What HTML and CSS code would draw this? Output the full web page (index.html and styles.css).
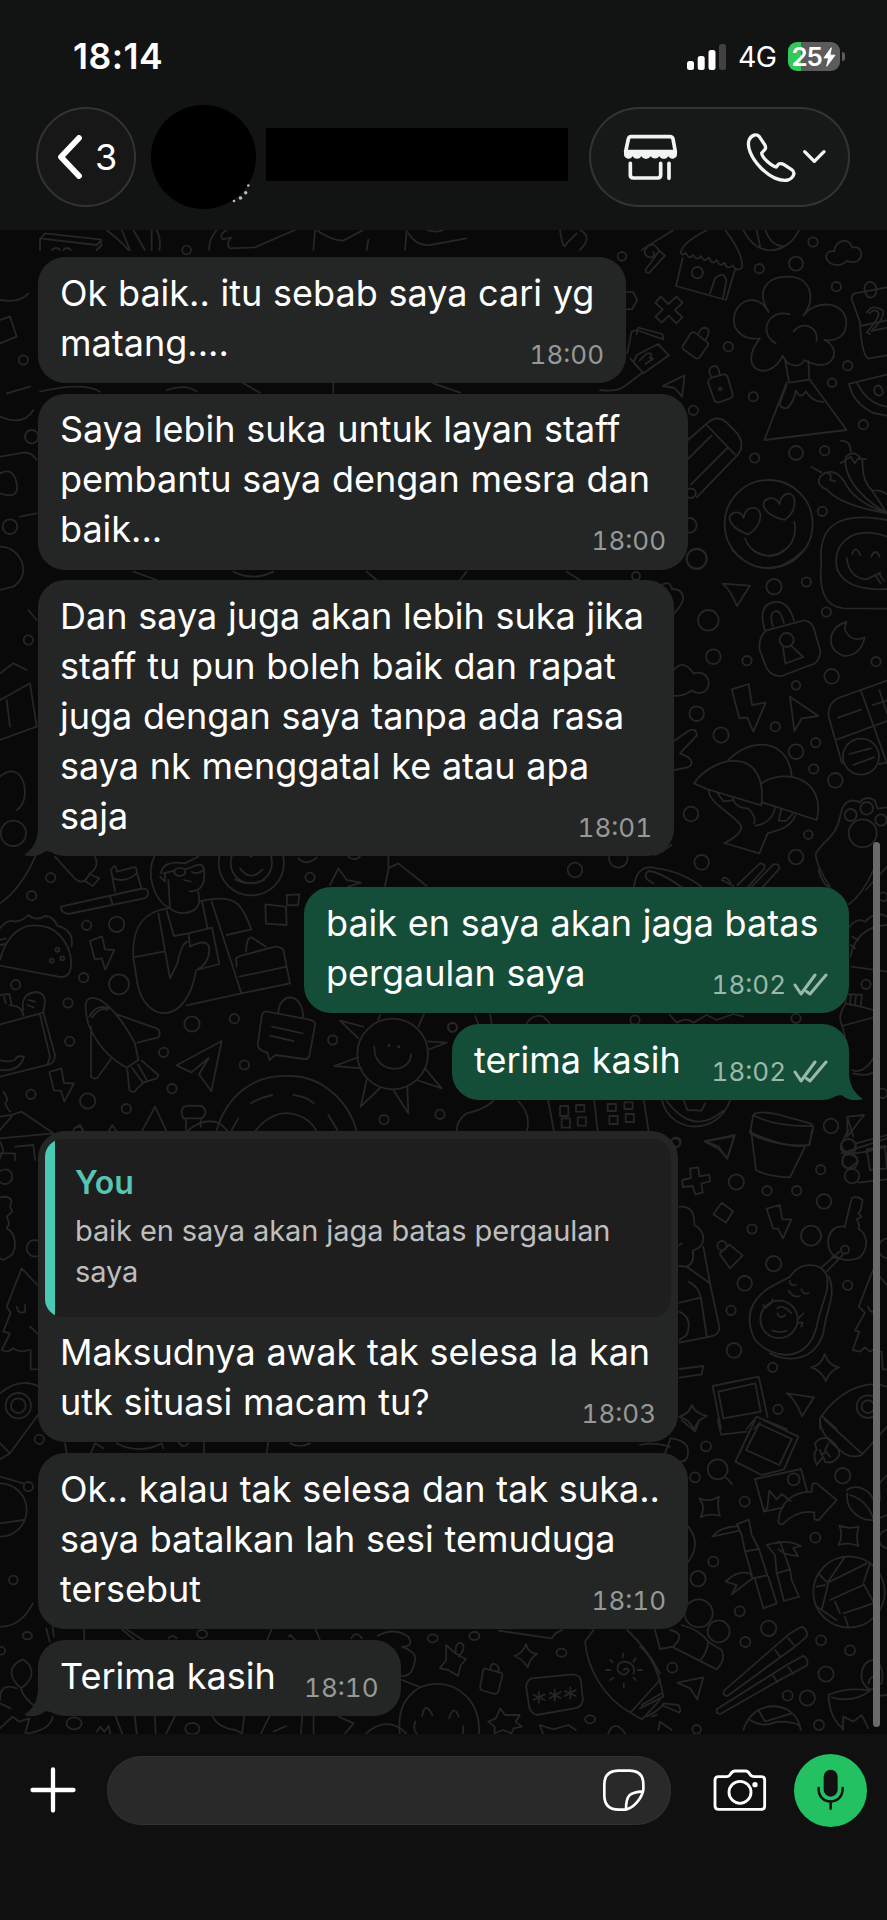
FILE: index.html
```html
<!DOCTYPE html>
<html lang="ms">
<head>
<meta charset="utf-8">
<title>Chat</title>
<link rel="stylesheet" href="styles.css">
</head>
<body>
<header class="header">
  <div class="status">
    <span class="clock">18:14</span>
    <div class="indicators">
      <svg class="signal" width="40" height="28" viewBox="0 0 40 28"><g fill="#fff"><rect x="0" y="18" width="7" height="9" rx="2.5"/><rect x="10.7" y="13" width="7" height="14" rx="2.5"/><rect x="21.5" y="7" width="7" height="20" rx="2.5"/></g><rect x="32" y="1" width="7" height="26" rx="2.5" fill="#414141"/></svg>
      <span class="network">4G</span>
      <div class="battery"><span>25</span><svg width="13" height="20" viewBox="0 0 14 20"><path d="M9 0 1 11h5L4 20l9-12H7.500z" fill="#fff" stroke="#fff" stroke-linejoin="round"/></svg></div>
      <i class="nub"></i>
    </div>
  </div>
  <nav class="nav">
    <div class="back">
      <svg width="26" height="44" viewBox="0 0 26 44"><path d="M22 3 4 22 22 41" fill="none" stroke="#fff" stroke-width="5.800" stroke-linecap="round" stroke-linejoin="round"/></svg>
      <span>3</span>
    </div>
    <div class="avatar"><svg class="dots" width="20" height="22" viewBox="0 0 20 22"><g fill="#bbb"><circle cx="2" cy="19" r="1.300"/><circle cx="8.500" cy="16" r="1.800"/><circle cx="13.700" cy="10.800" r="1.700"/><circle cx="16.300" cy="3.500" r="1.300"/></g></svg></div>
    <div class="name"></div>
    <div class="actions">
      <svg width="261" height="100" viewBox="87 321 783 300" fill="none" stroke="#f2f4f3" stroke-width="11" stroke-linecap="round" stroke-linejoin="round">
        <path d="M213 410H330Q337 410 339 417L346 455H197L205 417Q207 410 213 410Z"/>
        <path d="M192 454H351V461A14 14 0 0 1 325 469A16 16 0 0 1 298 469A16 16 0 0 1 272 469A16 16 0 0 1 244 469A15 15 0 0 1 218 469A14 14 0 0 1 192 461Z" fill="#f2f4f3" stroke="none"/>
        <path d="M211 490V525Q211 534 220 534H293Q302 534 302 525V490M327 490V535"/>
        <path d="M584 405Q574 407 568 418C559 438 573 474 603 504C630 532 661 545 684 540Q698 535 701 524Q704 515 695 509L672 494Q664 489 656 492L649 501C635 498 606 474 605 459L615 448Q619 442 614 434L598 410Q592 403 584 405Z" stroke-width="10"/>
        <path d="M734 455 763 484 792 455" stroke-width="10"/>
      </svg>
    </div>
  </nav>
</header>

<main class="chat">
  <svg class="wallpaper" viewBox="0 230 887 1504">
    <g transform="translate(600 230) scale(.33333)">
      <circle cx="66" cy="79" r="13"/><circle cx="639" cy="36" r="14"/><circle cx="588" cy="101" r="21"/><circle cx="478" cy="116" r="14"/><circle cx="709" cy="170" r="14"/><circle cx="292" cy="128" r="17"/><circle cx="385" cy="350" r="14"/><circle cx="460" cy="500" r="14"/><circle cx="280" cy="541" r="14"/><circle cx="743" cy="407" r="14"/><circle cx="696" cy="458" r="13"/><circle cx="790" cy="584" r="14"/><circle cx="464" cy="684" r="14"/><circle cx="588" cy="669" r="21"/><circle cx="674" cy="662" r="14"/><circle cx="667" cy="844" r="14"/><circle cx="268" cy="886" r="22"/><circle cx="290" cy="986" r="30"/>
      <path d="M176 65 139 116Q132 130 148 128L195 77 176 60Q162 36 145 48Q125 65 141 79L152 83Q168 78 160 66"/>
      <path d="M322 0Q250 35 242 67Q246 80 257 68Q268 92 279 74Q290 95 303 78Q312 100 327 82Q336 108 350 90Q360 114 373 98Q382 122 398 106Q410 128 426 112Q432 76 376 0M248 84 228 168 378 210 405 119M330 190 345 145Q374 120 379 154L369 204"/>
      <path d="M430 0Q460 60 512 61Q570 56 597 0M470 0 480 48M496 0Q512 46 547 48"/>
      <path d="M696 102C670 90 674 60 703 64C704 27 752 22 756 53C787 43 796 88 764 96Q750 98 742 92Q720 112 696 102Z"/>
      <path d="M182 200 205 222 229 200 248 218 225 240 247 262 229 280 206 257 185 278 166 260 188 239 166 218ZM80 185 100 187 112 210 96 237 78 238"/>
      <path d="M248 348 273 309Q280 303 288 310L322 337Q327 343 322 349L298 383Q292 388 285 383L248 356ZM296 309Q305 288 321 295Q333 304 317 329"/>
      <path d="M82 370 95 305 110 300 190 328 187 312 114 293 110 312M100 396 111 375 174 342 207 376 130 430ZM130 430 91 385M0 480Q50 488 78 466L125 430M119 391 140 371Q163 367 149 384L160 386 136 402"/>
      <path d="M188 468 254 436 246 500 224 474Z"/>
      <path d="M335 443 370 433Q381 432 383 442L398 492Q400 502 389 506L357 517Q346 519 342 508L325 460Q323 448 335 443ZM334 440Q319 415 342 408Q357 407 359 435"/><circle cx="361" cy="477" r="4"/>
      <path d="M506 246C460 170 515 138 566 140C626 140 653 200 610 257C650 205 740 214 739 281C736 325 704 334 673 330C730 355 700 438 613 390C604 412 564 416 548 377C510 460 405 420 480 325C430 332 397 300 402 262C411 205 475 188 506 246M569 253C510 235 470 305 527 340M580 305C606 270 659 290 649 334M555 387 567 458 628 449 625 393M560 458 493 630 740 600 630 450"/>
      <path d="M560 465 541 514Q535 534 557 535Q576 530 588 482Q602 510 618 484Q635 515 670 516"/>
      <path d="M861 172 764 190Q754 194 755 207L780 277Q784 370 804 386L861 376M780 288 861 271M800 160Q808 150 824 162Q836 182 822 199Q803 210 797 190Q788 172 800 160M800 248Q818 220 848 241Q856 264 814 303L861 293M808 250Q828 232 836 251Q836 266 800 307L810 312"/>
      <path d="M861 434 747 462Q760 520 820 549L861 557M772 460Q800 520 861 530M826 470Q842 458 850 488Q840 505 825 490Q820 480 826 470"/>
      <path d="M264 630 321 580Q350 552 380 578L413 612Q436 645 413 675L290 802M317 582 405 674M265 686 335 616M273 763 382 654M264 777Q286 772 288 790Q284 808 264 802"/>
      <circle cx="506" cy="882" r="132"/>
      <path d="M446 913C400 900 370 862 402 848Q423 843 431 864C435 830 471 823 481 850Q484 888 446 913ZM553 870C490 855 475 815 507 805Q531 802 538 823C546 783 582 781 584 815Q584 850 553 870ZM583 875C600 958 515 1000 464 964Q443 950 435 925"/>
      <path d="M661 739Q698 706 733 754Q760 814 861 850Q720 825 680 778Q646 765 661 739ZM634 711 664 727M674 728Q700 730 690 750L706 754M738 680Q766 655 788 694Q785 750 815 780L861 850Q745 780 736 700ZM722 632Q753 632 752 665M722 700 752 680 764 700 775 685 798 688M820 782Q840 778 861 793"/>
      <path d="M861 870C700 840 655 900 664 1000C655 1090 680 1130 730 1135L861 1136M861 920C750 880 693 950 712 1020Q742 1085 861 1077M756 973Q766 942 781 975M814 980Q826 952 839 980M740 984Q748 1045 800 1048L842 1028M826 1035 842 1060M836 1030 852 1052"/>
    </g>
    <g transform="translate(600 550) scale(.33333)">
      <circle cx="290" cy="27" r="30"/><circle cx="522" cy="110" r="23"/><circle cx="619" cy="96" r="14"/><circle cx="679" cy="186" r="14"/><circle cx="325" cy="211" r="31"/><circle cx="340" cy="320" r="22"/><circle cx="441" cy="332" r="14"/><circle cx="828" cy="335" r="14"/><circle cx="695" cy="379" r="22"/><circle cx="588" cy="406" r="13"/><circle cx="290" cy="491" r="22"/><circle cx="526" cy="530" r="14"/><circle cx="363" cy="555" r="23"/><circle cx="588" cy="605" r="22"/><circle cx="647" cy="578" r="14"/><circle cx="641" cy="657" r="14"/><circle cx="706" cy="691" r="22"/><circle cx="273" cy="792" r="22"/><circle cx="625" cy="854" r="13"/><circle cx="588" cy="921" r="22"/><circle cx="305" cy="937" r="22"/><circle cx="783" cy="620" r="54"/><circle cx="560" cy="270" r="21"/><circle cx="108" cy="78" r="12"/><circle cx="55" cy="925" r="28"/><circle cx="752" cy="795" r="18"/><circle cx="800" cy="775" r="19"/><circle cx="843" cy="810" r="17"/><circle cx="788" cy="850" r="42"/>
      <path d="M458 0Q510 35 553 0M396 0Q500 110 612 0"/>
      <path d="M368 101 450 107 411 168Q390 117 368 101ZM570 440 655 498 606 505 583 543ZM395 418 446 402 456 465 497 458 460 545 442 503 418 504Z"/>
      <path d="M494 240C477 180 495 160 524 156Q565 152 582 212M498 242 612 211Q636 215 642 236L661 302Q659 330 643 341L545 378Q515 380 500 355L479 300Q475 262 498 242ZM519 229Q505 190 528 183Q542 182 552 219M549 292 556 340 610 321 572 286M740 216C680 230 676 305 734 318Q782 316 794 263Q752 278 735 240Q732 230 740 216Z"/>
      <path d="M222 360Q250 325 281 371C318 355 342 403 314 425Q290 435 277 421Q250 440 222 437M222 573 265 543Q290 530 290 557L240 610 260 619Q290 640 260 653L222 660M185 105Q210 90 216 117Q245 116 249 140Q252 160 222 190"/>
      <path d="M861 392 715 444Q682 460 686 500L726 640M782 420 861 640M712 568 861 513M714 503 783 479M818 465 861 452M838 420 861 490M748 612 812 595M760 645 822 622M838 642 861 638"/>
      <path d="M282 700C345 610 505 590 484 766L320 717ZM382 633C455 555 565 570 575 676M484 700C560 650 680 690 650 810L487 757M325 720C330 765 400 790 424 829Q425 853 373 879L478 910 503 850C530 840 565 840 586 797M350 726 370 754 397 751M397 740Q405 775 444 775Q470 800 462 820M467 827Q515 820 526 772M544 778 536 812 558 813 578 792"/>
      <path d="M102 1010Q110 940 170 955Q250 965 310 1015M250 1015Q180 965 145 963Q122 980 160 1000M365 990 400 1008M368 985Q380 978 392 1000M412 1005 480 940Q495 940 494 954L445 1010M455 1010 520 943Q540 940 538 956L485 1015M690 1010Q650 950 647 912C670 870 710 860 720 800Q732 735 780 757Q798 734 825 752L832 774M861 772 832 776M797 1020 861 950M165 915Q190 905 214 885"/>
    </g>
    <g transform="translate(0 830) scale(.33333)">
      <circle cx="40" cy="10" r="38"/><circle cx="152" cy="143" r="14"/><circle cx="95" cy="197" r="14"/><circle cx="260" cy="286" r="14"/><circle cx="350" cy="283" r="23"/><circle cx="251" cy="443" r="14"/><circle cx="47" cy="464" r="14"/><circle cx="357" cy="463" r="30"/><circle cx="204" cy="519" r="14"/><circle cx="209" cy="634" r="14"/><circle cx="93" cy="793" r="14"/><circle cx="263" cy="813" r="23"/><circle cx="379" cy="836" r="14"/><circle cx="516" cy="776" r="14"/><circle cx="491" cy="667" r="14"/><circle cx="576" cy="582" r="23"/><circle cx="703" cy="566" r="14"/><circle cx="733" cy="705" r="14"/><circle cx="998" cy="630" r="14"/><circle cx="930" cy="142" r="14"/><circle cx="1152" cy="869" r="14"/><circle cx="1320" cy="853" r="14"/><circle cx="1357" cy="592" r="14"/><circle cx="1178" cy="672" r="106"/><circle cx="754" cy="98" r="98"/><circle cx="754" cy="98" r="62"/>
      <circle cx="172" cy="359" r="6"/><circle cx="155" cy="392" r="6"/><circle cx="187" cy="385" r="6"/><circle cx="1167" cy="646" r="2"/><circle cx="1196" cy="650" r="2"/>
      <path d="M0 220Q60 180 106 80M165 80 224 145Q250 170 268 132Q300 110 285 80M268 132 298 145 278 168 255 153"/>
      <path d="M345 184 333 120Q350 95 350 125L390 115Q412 105 410 125L425 178M340 145Q375 160 410 130M182 230 420 177Q442 172 444 186Q447 200 432 205L205 252Q184 250 182 230ZM330 200 337 220"/>
      <path d="M0 295Q22 265 45 275Q70 272 85 255Q110 275 135 258Q160 258 172 288Q222 300 215 350M0 390C20 310 70 280 115 287C180 290 225 360 210 425Q200 445 175 440L0 407M0 330 18 325M0 345 16 342"/>
      <path d="M270 333 306 319 315 358 343 360 316 419 305 385 284 388ZM148 726 184 715 192 759 222 760 193 815 183 782 162 782ZM530 706 665 633 634 784 597 733 626 684 574 727Z"/>
      <path d="M463 80C440 125 455 205 508 235M505 150 510 235Q540 260 580 242Q598 230 598 210L595 186M483 130Q488 90 555 100L595 80M490 130 524 122M522 122Q535 108 553 118Q562 136 539 138Q522 136 522 122M553 118 574 112Q610 95 612 118Q595 136 575 125M480 140 495 155 495 130M612 120Q620 185 568 184M552 150 572 155"/>
      <path d="M503 235C430 245 395 290 400 382L412 460C435 580 560 590 588 422M400 382 490 365M475 250 510 445 532 400Q545 340 562 335M500 242 522 318 565 310 636 293 658 402 590 420Q632 398 627 350Q618 325 570 350L566 312M606 214 622 292M598 214Q680 195 710 220Q730 235 754 298L680 315M635 215 724 490M560 526 724 490 870 460 850 360Q843 350 826 350L720 378 708 385 710 410M718 440 860 410M738 365Q740 320 755 322L798 350"/>
      <path d="M796 223 858 230 860 285 798 281ZM860 195 898 193 894 226 862 225ZM720 62 755 80M720 115Q752 157 788 118M706 148Q750 170 792 150"/>
      <path d="M798 544 925 568Q948 573 945 586L928 678Q922 690 912 687L826 675 808 690 802 668Q776 662 773 645L785 560Q787 545 798 544ZM816 590 908 610M810 617 880 633M835 550C835 490 905 480 910 560"/>
      <path d="M262 510C285 490 340 520 405 640L415 690 380 713Q300 670 265 582 250 525 262 510ZM268 560Q290 520 325 535M276 562Q300 530 322 540M350 553 470 595Q485 605 475 622L412 638M273 590V740Q282 750 292 743L333 687M382 718 388 780Q400 795 412 775L430 758 470 745Q475 740 475 735L425 692M395 712 430 760M415 705 440 750"/>
      <path d="M0 495 28 492 35 525M12 500 17 520M28 526Q66 525 70 556M70 540Q60 490 110 486Q145 490 130 545M85 510 105 515M82 525 100 532M0 583 130 548 165 675Q165 700 145 704L0 740M120 555 150 680 143 702M0 720Q60 725 72 680Q50 675 45 690 25 698 0 690"/>
      <path d="M1020 572 1090 590M1020 572 1075 625M1283 634 1340 638 1282 660M1074 682 1003 708 1085 715M1100 750 1082 830 1140 774M1180 780 1225 850 1222 770M1250 750 1325 775 1275 715M1135 568 1140 555M1255 590 1272 552M1123 650C1120 735 1234 733 1233 672"/>
      <path d="M650 900C680 800 760 730 870 738C970 738 1050 820 1070 905M765 905C790 870 830 845 870 850Q930 860 950 905M752 820Q780 803 817 795M880 795Q920 800 942 820M985 855 1012 900M715 865 695 900M550 865Q535 830 565 827L605 828Q628 845 605 865ZM558 868V900M602 868V890M560 905Q610 860 660 880L685 905M425 905 465 830 500 905M325 905 337 885 350 905M225 895 240 885 250 905"/>
      <path d="M0 860 35 855 65 845 160 910M35 860 0 900M10 785Q30 810 15 820 25 840 30 845M0 925 160 910M0 970H45V990M45 950 100 945 105 990M0 935 10 960 0 985"/>
      <path d="M1015 115 990 165M1015 115 1040 150 1083 158 1045 170M1165 80V120L1155 168M1165 115 1195 100 1280 168M1045 80Q1060 95 1080 80M895 85Q920 110 950 82"/>
    </g>
    <g transform="translate(440 870) scale(.33333)">
      <circle cx="405" cy="0" r="22"/><circle cx="1278" cy="343" r="14"/><circle cx="1330" cy="80" r="13"/><circle cx="1173" cy="768" r="22"/><circle cx="585" cy="450" r="14"/><circle cx="1068" cy="445" r="14"/><circle cx="38" cy="472" r="13"/><circle cx="1328" cy="670" r="14"/><circle cx="708" cy="816" r="14"/><circle cx="1225" cy="830" r="23"/><circle cx="1230" cy="874" r="23"/>
      <path d="M1225 175Q1250 140 1275 155Q1310 120 1341 140M1231 260Q1250 170 1341 165M1235 290 1341 305M1232 225 1245 235M1237 200 1255 210M1215 400 1262 410 1266 375 1220 372ZM1232 375 1230 405M1248 375 1245 407M1205 468 1310 440 1300 420 1262 410M1215 405Q1190 440 1208 470L1215 500M1237 600Q1270 615 1303 560M1240 610Q1300 625 1310 590"/>
      <path d="M325 693 342 785M463 693 473 785M612 693 626 785M360 708H385V738H360ZM408 705H433V725H408ZM365 745H390V773H365ZM413 742H438V767H413ZM503 702H528V723H503ZM553 697H578V717H553ZM508 738H533V762H508ZM557 732H582V756H557Z"/>
      <path d="M667 693C690 790 830 800 870 693M680 693Q760 800 850 722M732 693 742 720 785 722 795 700M160 693Q130 720 80 730Q50 750 50 783M235 693Q275 735 260 785M795 813 884 798 861 865 836 830Z"/>
      <path d="M940 735Q955 720 1020 735L1110 760Q1120 765 1120 775L1107 825Q1050 840 930 787ZM940 735Q1000 770 1115 768M1222 740 1272 735 1222 800ZM1222 740 1240 800M1205 850 1341 805M1135 0Q1150 50 1180 60M1227 103Q1270 70 1300 0M105 438 115 462M150 432 155 462M690 435 710 458Q740 440 760 458L800 435 830 450 880 432 910 440M260 460Q280 430 310 440L330 460"/>
    </g>
    <g transform="translate(640 1130) scale(.33333)">
      <circle cx="106" cy="39" r="14"/><circle cx="289" cy="156" r="23"/><circle cx="381" cy="182" r="14"/><circle cx="470" cy="182" r="14"/><circle cx="542" cy="119" r="14"/><circle cx="552" cy="214" r="22"/><circle cx="336" cy="297" r="14"/><circle cx="513" cy="317" r="30"/><circle cx="401" cy="401" r="23"/><circle cx="314" cy="460" r="22"/><circle cx="273" cy="541" r="14"/><circle cx="623" cy="466" r="14"/><circle cx="282" cy="661" r="22"/><circle cx="398" cy="712" r="14"/><circle cx="414" cy="838" r="14"/><circle cx="417" cy="568" r="56"/><circle cx="615" cy="359" r="12"/><circle cx="636" cy="138" r="22"/><circle cx="246" cy="347" r="14"/><circle cx="684" cy="830" r="34"/><circle cx="684" cy="830" r="19"/><circle cx="745" cy="355" r="30"/>
      <path d="M333 0 348 120Q380 140 450 142L495 50M330 10Q400 50 508 46L516 0M195 35 284 15 262 86 236 57Z"/>
      <path d="M150 115 175 112 178 139 208 134 210 154 184 161 188 188 166 193 158 168 128 171 127 150 153 144ZM245 218 279 244 258 278 220 253ZM380 236 419 225 427 268 454 268 429 325 414 296 399 295ZM241 375Q238 368 246 365L268 343 308 377 270 415ZM514 712Q545 705 554 672Q565 706 597 712Q565 725 558 754Q545 722 514 712ZM118 860Q150 850 155 825Q168 852 201 858Q172 870 162 897Q148 870 118 860ZM440 790 522 802 486 859Q465 805 440 790Z"/>
      <path d="M118 230Q165 225 163 285C200 305 200 350 158 362Q165 400 140 410L210 460 238 590Q240 615 210 620L118 638M118 345 125 340M118 408 140 410M190 350 210 460M145 455Q175 470 182 500L200 618M118 518 182 503M118 545Q160 565 140 615L118 630M118 717 190 708 185 733 118 743"/>
      <path d="M450 440C480 395 540 395 560 435C570 490 545 510 530 590C500 700 400 690 345 630C310 560 335 510 385 475ZM567 440C590 500 560 530 550 610C520 700 440 695 390 670M449 452Q450 470 468 465M484 478Q490 497 506 488M446 482Q460 505 480 498M412 535Q425 525 436 535M440 535 454 550M412 550Q420 570 436 555M398 602Q420 610 440 602M370 525 375 535 393 520 398 508M475 565 490 550M472 578 488 578 484 590"/>
      <path d="M614 292 635 205Q650 195 668 210L662 240 655 250 665 260 650 268 658 285 655 295M612 290C560 280 550 360 585 378Q620 400 660 382C690 350 680 310 655 296M598 365 545 412M608 375 560 425M577 380 592 385M700 418Q675 480 656 530L675 548 645 602 658 605 638 660 660 665 675 652 690 665 705 655 720 665M741 465 700 418M684 530Q690 550 705 545L710 530M725 665 728 718H741"/>
      <path d="M218 768 356 740 383 862M218 768 243 895M235 785 346 760 362 845 250 865ZM320 897 350 860 440 897M342 897 360 878M625 0 605 40Q600 60 626 70Q646 60 648 40L741 15M608 90Q605 75 625 72Q650 74 653 95L625 116 608 105ZM640 70 680 65 741 50M680 58 735 48 741 115 690 120ZM655 158 741 148M741 770C670 745 590 790 540 865V897M548 860 590 897"/>
    </g>
    <g transform="translate(640 1420) scale(.33333)">
      <circle cx="198" cy="79" r="15"/><circle cx="233" cy="148" r="30"/><circle cx="165" cy="172" r="15"/><circle cx="314" cy="245" r="15"/><circle cx="461" cy="178" r="18"/><circle cx="608" cy="167" r="23"/><circle cx="526" cy="353" r="15"/><circle cx="220" cy="425" r="15"/><circle cx="174" cy="476" r="23"/><circle cx="299" cy="574" r="15"/><circle cx="176" cy="580" r="42"/><circle cx="236" cy="634" r="33"/><circle cx="386" cy="625" r="23"/><circle cx="316" cy="666" r="15"/><circle cx="543" cy="661" r="15"/><circle cx="630" cy="691" r="15"/><circle cx="558" cy="762" r="23"/><circle cx="443" cy="827" r="15"/><circle cx="502" cy="834" r="23"/><circle cx="97" cy="743" r="15"/><circle cx="537" cy="915" r="15"/><circle cx="627" cy="516" r="107"/><circle cx="170" cy="928" r="13"/><circle cx="745" cy="357" r="28"/>
      <path d="M233 0 243 44 320 35M345 0 286 125 365 165 432 148 475 50 370 0M358 12 455 57 418 135 318 90ZM345 177 483 147 502 217M345 177 372 275 430 262M382 263 388 212 410 238 425 222 452 243M382 263 372 275M415 303C420 250 455 215 515 215L518 190 530 190 590 240 535 301 523 298V277C480 270 450 290 428 313Q415 315 415 303Z"/>
      <path d="M178 235Q205 248 237 230Q230 255 240 288Q205 278 182 292Q198 260 178 235ZM598 317Q625 328 656 320Q647 350 655 378Q627 365 596 375Q610 345 598 317ZM258 173 277 193"/>
      <path d="M290 313 327 299 335 345 357 387 315 394 305 345ZM315 394 338 475 382 466 357 387M345 478 370 565 410 550 385 470M217 350Q240 320 295 318L298 332ZM257 485Q290 450 330 460L338 475 275 523 290 495ZM380 375 420 365 450 448 410 460 405 405ZM410 458 432 543 477 530 455 480 450 448M408 370Q440 358 483 378L460 384 474 408Q435 405 415 388"/>
      <path d="M540 0Q540 50 615 102Q640 115 665 105L741 20M555 0 665 100M525 120Q520 95 530 90L525 70Q540 50 565 55Q600 80 598 105Q580 135 555 125L550 110 530 135ZM565 70 555 90 570 110M540 90 545 105 560 95M620 210C650 190 690 210 697 235L720 220M622 220C615 270 660 305 705 300L741 285M630 225Q680 240 700 295M718 190 741 165"/>
      <path d="M535 460 562 488 615 410M565 490 545 570M570 485 680 430M530 500 555 495M570 540 670 495M600 580 585 545M610 580 700 550M615 590 625 622M670 490 705 555M672 483 690 430M530 560 590 600"/>
      <path d="M252 812 450 640 485 620Q505 630 500 650L465 680 262 828Q248 828 252 812ZM405 690 420 710M445 655 462 675M230 868 440 735 490 707Q508 720 500 737L410 785 245 880Q228 885 230 868ZM400 768 412 787M445 742 460 762M310 930C340 830 470 840 482 930M355 870 375 905 455 880M330 900Q370 925 410 905 470 905 480 920M112 788 190 772 172 838 150 805Z"/>
      <path d="M0 680Q50 720 70 830L0 865M5 855 65 820M20 890Q60 870 72 850L115 855Q125 870 118 878L72 858M35 890 50 885M55 930 60 905 95 930M45 630 60 687 100 680Q140 640 90 630M125 615Q180 630 205 665L245 690Q258 720 230 748L100 682M205 665Q200 700 182 720M0 75Q40 65 90 80M90 55Q145 60 144 95Q145 125 120 125M90 60 75 100M125 0 165 35 178 0M145 320Q185 370 145 425"/>
      <path d="M565 825Q570 900 610 925M565 825Q620 800 690 812M575 832Q640 850 690 812M665 760Q670 720 705 720Q735 740 725 790L690 810Q660 790 665 760ZM685 790Q695 755 710 785M608 930 610 890 640 905 665 885 685 925M718 190 720 240M700 830 741 825"/>
    </g>
    <g transform="translate(0 1120) scale(.33333)">
      <circle cx="105" cy="385" r="25"/><circle cx="55" cy="857" r="38"/><circle cx="55" cy="857" r="22"/><circle cx="118" cy="958" r="14"/><circle cx="15" cy="170" r="22"/><circle cx="235" cy="35" r="15"/>
      <path d="M0 232Q30 225 35 245L30 260 37 275 20 290 28 310 20 325C50 340 50 385 35 405L10 420 0 415M112 495 65 445 20 560 32 578 10 635 30 640 5 690Q25 700 38 685 60 700 85 690M50 560Q55 585 75 575V555M90 620 112 640M92 690V748H112M0 820Q60 770 118 800M118 880 30 1000 0 970M30 1000 0 1018M195 970 202 1010M272 1000 285 970 310 985M350 970Q415 1005 485 970L490 985M535 965Q550 990 565 970M612 965V1000M805 965 800 1000M870 970Q900 985 930 970"/>
    </g>
    <g transform="translate(0 1600) scale(.42090 .33333)">
      <circle cx="65" cy="107" r="11"/><circle cx="480" cy="102" r="12"/><circle cx="1028" cy="115" r="12"/><circle cx="1127" cy="108" r="12"/><circle cx="1334" cy="158" r="12"/><circle cx="1402" cy="358" r="12"/><circle cx="176" cy="370" r="18"/><circle cx="457" cy="386" r="17"/><circle cx="0" cy="152" r="12"/>
      <path d="M0 80Q50 80 78 10M110 85 118 125M125 80 128 110M200 85V120M290 88 320 120M300 88 340 120M635 120 645 88M750 88 760 120M685 110 690 105 700 118M835 115Q845 90 860 115M400 115Q410 100 420 115"/>
      <path d="M50 265C10 220 30 190 55 178C80 200 85 235 50 265ZM40 265Q0 245 0 300M50 268Q60 300 85 320M0 310 25 325M0 385 30 350 45 365 70 355 60 400M65 400Q120 390 125 350M275 350 290 400M320 350 325 400M368 350 370 400M415 350 395 400M230 395 238 380 248 395 258 378 262 400M505 350Q520 385 560 390L575 400M580 350 575 400M640 350 620 400M718 350 715 400M650 395 680 378M745 400V350M805 350 840 370 820 400M870 400Q920 345 965 400"/>
      <path d="M897 108Q935 80 970 110Q985 140 955 140Q995 160 985 185Q980 230 955 228M955 240 995 260M950 400C930 200 1145 205 1138 400M1003 348Q1010 300 1027 345M1067 355Q1078 310 1090 350M987 365Q980 390 990 400M1100 378V400"/>
      <path d="M1060 135 1082 160 1107 178 1095 195 1088 228 1065 210 1045 205 1060 180ZM1083 155Q1080 130 1095 128Q1110 140 1090 170M1150 205 1190 218Q1195 220 1193 230L1184 275Q1180 285 1170 280L1144 270Q1140 268 1141 258L1148 210ZM1165 206Q1165 190 1175 192Q1190 200 1183 217M1250 132Q1255 160 1276 162Q1258 175 1254 202Q1240 175 1222 168Q1242 160 1250 132Z"/>
      <path d="M1263 235 1360 223Q1378 225 1380 240L1385 300Q1382 322 1365 325L1275 345Q1262 340 1258 325L1250 260Q1252 240 1263 235ZM1280 275V308M1268 285 1294 300M1268 300 1294 283M1318 268V302M1306 278 1332 294M1306 295 1332 276M1355 262V296M1342 273 1368 288M1342 288 1368 270"/>
      <path d="M1185 92 1310 115 1320 100 1335 90M1410 90 1390 125C1395 200 1430 290 1500 340L1525 358 1568 300M1500 335 1568 240M1490 90Q1540 150 1568 220M1482 210Q1490 200 1494 212Q1482 235 1468 212C1460 170 1515 180 1505 220M1480 160V172M1510 175 1505 185M1450 180 1456 188M1440 210H1450M1450 240 1458 233M1482 250V262M1510 240 1505 232M1515 210H1525"/>
      <path d="M1188 325 1200 345 1235 345 1225 365 1240 380 1220 385 1215 400 1195 390 1175 400 1175 380 1160 365 1178 355ZM1290 400 1282 375 1315 388 1350 375 1368 390M1445 400Q1460 355 1485 400"/>
    </g>
    <g transform="translate(0 0) scale(.33333)">
      <circle cx="560" cy="750" r="13"/>
      <path d="M120 750V718L135 700 300 718 305 735 290 750M120 715 290 735 305 720M155 750Q170 738 180 750M190 750Q200 738 212 750M320 690Q370 730 385 750M365 690 390 750M400 690 435 750M455 690V750M470 690Q485 720 478 750M650 690Q625 720 628 750M680 690Q655 705 668 718L695 712Q675 730 690 745L765 742 885 690M945 690 940 750M950 690Q990 720 1030 722L1090 690M1105 720 1100 750M1220 690 1215 750M1225 700Q1250 740 1290 735L1400 715M1280 690Q1310 700 1330 690M1680 690Q1690 760 1700 730L1730 700M1740 690Q1780 710 1740 750M1925 750 2020 690"/>
      <path d="M0 900Q60 910 85 880M0 960 30 950 50 1010 0 1030M20 1180 90 1160M0 1250Q70 1280 100 1230M0 1370 60 1360Q90 1350 110 1380M0 1420Q40 1400 50 1450 T0 1480M60 1550 110 1540M0 1640C60 1640 100 1720 40 1760L0 1770M85 1830 110 1860M0 2020 40 1990 80 2010M0 2100 90 2050 110 2180 0 2220M20 2100 30 2180M0 2330C70 2270 100 2400 50 2430"/>
      <circle cx="70" cy="1080" r="14"/><circle cx="95" cy="1310" r="20"/><circle cx="30" cy="1580" r="22"/><circle cx="85" cy="1920" r="14"/><circle cx="0" cy="4530" r="80"/><circle cx="85" cy="4460" r="14"/><circle cx="40" cy="4740" r="13"/>
      <path d="M120 1175Q250 1145 300 1175M500 1170Q560 1150 590 1175M730 1150 780 1178M1000 1150V1178M1300 1150 1380 1178M400 1715 470 1740M700 1715Q760 1745 820 1715M1100 1715 1130 1740M1400 1715 1380 1740M1700 1715 1740 1740M0 4430 70 4450M0 4570 70 4560"/>
    </g>
  </svg>

  <div class="group">
    <div class="bubble in w588"><p>Ok baik.. itu sebab saya cari yg<br>matang....</p><time>18:00</time></div>
    <div class="bubble in w650"><p>Saya lebih suka untuk layan staff<br>pembantu saya dengan mesra dan<br>baik...</p><time>18:00</time></div>
    <div class="bubble in w636"><p>Dan saya juga akan lebih suka jika<br>staff tu pun boleh baik dan rapat<br>juga dengan saya tanpa ada rasa<br>saya nk menggatal ke atau apa<br>saja</p><time>18:01</time><svg class="tail" width="44" height="50" viewBox="0 0 44 50"><path d="M14 0V22Q14 40 0 49Q12 53 22 45L44 50V0Z" fill="#242625"/></svg></div>
  </div>
  <div class="group sent">
    <div class="bubble out w545"><p>baik en saya akan jaga batas<br>pergaulan saya</p><time>18:02<svg width="36" height="26" viewBox="0 0 36 26"><path d="M2 13 8 22 22 3M13.500 19.500 17 22 33 3" fill="none" stroke="#9bb9ab" stroke-width="3" stroke-linecap="round" stroke-linejoin="round"/></svg></time></div>
    <div class="bubble out w397"><p>terima kasih</p><time>18:02<svg width="36" height="26" viewBox="0 0 36 26"><path d="M2 13 8 22 22 3M13.500 19.500 17 22 33 3" fill="none" stroke="#9bb9ab" stroke-width="3" stroke-linecap="round" stroke-linejoin="round"/></svg></time><svg class="tail" width="44" height="50" viewBox="0 0 44 50"><path d="M14 0V22Q14 40 0 49Q12 53 22 45L44 50V0Z" fill="#144d38"/></svg></div>
  </div>
  <div class="group">
    <div class="bubble in quoted w640">
      <blockquote><b>You</b><span>baik en saya akan jaga batas pergaulan<br>saya</span></blockquote>
      <p>Maksudnya awak tak selesa la kan<br>utk situasi macam tu?</p><time>18:03</time>
    </div>
    <div class="bubble in w650"><p>Ok.. kalau tak selesa dan tak suka..<br>saya batalkan lah sesi temuduga<br>tersebut</p><time>18:10</time></div>
    <div class="bubble in w362"><p>Terima kasih</p><time>18:10</time><svg class="tail" width="44" height="50" viewBox="0 0 44 50"><path d="M14 0V22Q14 40 0 49Q12 53 22 45L44 50V0Z" fill="#242625"/></svg></div>
  </div>
  <i class="scrollbar"></i>
</main>

<footer class="composer">
  <svg width="46" height="46" viewBox="0 0 46 46"><path d="M2.500 23H43.500M23 2.500V43.500" stroke="#fff" stroke-width="4.300" stroke-linecap="round"/></svg>
  <div class="field">
    <svg width="42" height="42" viewBox="128 146 126 126" fill="none" stroke="#fff" stroke-width="8" stroke-linejoin="round"><path d="M175 151H207Q249 151 249 192V208C245 232 221 263 195 268H175Q132 268 132 225V193Q132 151 175 151ZM248 213C207 215 197 226 197 267"/></svg>
  </div>
  <svg class="camera" width="54" height="42" viewBox="458 143 162 126" fill="none" stroke="#fff" stroke-width="8.500" stroke-linejoin="round"><path d="M475 166H498Q506 166 510 159Q516 149 524 149H556Q563 149 568 158Q573 166 582 166H603Q613 166 613 176V254Q613 264 603 264H475Q464 264 464 254V176Q464 166 475 166Z"/><circle cx="539" cy="213" r="33"/><circle cx="584" cy="190" r="8" fill="#fff" stroke="none"/></svg>
  <div class="mic"><svg width="28" height="42" viewBox="768 146 84 124"><rect x="788" y="147" width="42" height="81" rx="21" fill="#111"/><path d="M773 202C770 256 847 256 845 202M809 242V264" fill="none" stroke="#111" stroke-width="7.500" stroke-linecap="round"/></svg></div>
</footer>
</body>
</html>
```

FILE: styles.css
```css
* { box-sizing: border-box; }
body { margin: 0; width: 887px; height: 1920px; display: flex; flex-direction: column; background: #111; color: #fff; font-family: Inter, "Liberation Sans", sans-serif; overflow: hidden; }
svg { display: block; flex: none; }
p, blockquote { margin: 0; }

.header { height: 230px; background: #121313; }
.status { height: 105px; padding: 8px 42px 0 73px; display: flex; align-items: center; justify-content: space-between; }
.clock { font-size: 35.500px; font-weight: 600; letter-spacing: .5px; }
.indicators { display: flex; align-items: center; }
.network { margin-left: 11px; width: 50px; font-size: 28.500px; font-weight: 400; letter-spacing: -.6px; }
.battery { width: 52px; height: 29px; border-radius: 9px; background: linear-gradient(90deg, #34c759 13px, #5c5c5c 13px); display: flex; align-items: center; justify-content: center; font-size: 26px; font-weight: 600; letter-spacing: -1.300px; }
.battery svg { margin-left: 2px; }
.nub { width: 3px; height: 9px; margin-left: 2px; border-radius: 0 3px 3px 0; background: #5c5c5c; }

.nav { padding-left: 36px; display: flex; align-items: center; height: 104px; }
.back { width: 100px; height: 100px; border: 2px solid #333; border-radius: 50%; background: #171717; display: flex; align-items: center; padding-left: 19px; gap: 12px; font-size: 36px; }
.avatar { position: relative; width: 105px; height: 104px; margin-left: 15px; border-radius: 50%; background: #000; }
.dots { position: absolute; right: 4px; bottom: 5px; }
.name { width: 302px; height: 53px; margin: 0 0 5px 10px; background: #000; }
.actions { width: 261px; height: 100px; margin-left: 21px; border-radius: 50px; background: #171918; box-shadow: inset 0 0 0 2px #323433; }

.chat { position: relative; height: 1504px; padding: 27px 38px 0; display: flex; flex-direction: column; gap: 31px; background: #090909; overflow: hidden; }
.wallpaper { position: absolute; inset: 0; width: 887px; height: 1504px; fill: none; stroke: #262626; stroke-width: 1.800px; stroke-linecap: round; stroke-linejoin: round; }
.wallpaper * { vector-effect: non-scaling-stroke; }
.group { display: flex; flex-direction: column; align-items: flex-start; gap: 10.500px; }
.group + .sent, .sent + .group { gap: 11px; }
.sent { align-items: flex-end; }
.bubble { position: relative; display: grid; padding: 10.500px 22px 15.500px 22px; border-radius: 27px; background: #242625; font-size: 36px; line-height: 50px; letter-spacing: 0; word-spacing: .6px; white-space: nowrap; }
.bubble p { grid-area: 1 / 1; position: relative; z-index: 1; }
.bubble time { grid-area: 1 / 1; position: relative; z-index: 1; place-self: end; display: flex; align-items: center; font-size: 26px; font-feature-settings: "tnum"; line-height: 26px; letter-spacing: 0; color: #979998; }
.out { background: #144d38; padding-right: 20px; }
.out time { color: #9bb9ab; gap: 7px; }
.tail { position: absolute; left: -14px; bottom: 0; }
.out .tail { left: auto; right: -14px; transform: scaleX(-1); }
.w588 { width: 588px; }
.w650 { width: 650px; }
.w636 { width: 636px; }
.w545 { width: 545px; }
.w397 { width: 397px; }
.w640 { width: 640px; }
.w362 { width: 362.500px; }
.quoted { padding-top: 8px; row-gap: 9.500px; }
.quoted p, .quoted time { grid-row: 2; }
.quoted blockquote { grid-area: 1 / 1; height: 178px; margin: 0 -15px; padding: 19px 0 0 30px; border-radius: 18px; background: linear-gradient(90deg, #4ac9b5 10px, #1e1e1e 10px); display: flex; flex-direction: column; overflow: hidden; }
blockquote b { font-size: 32px; font-weight: 600; line-height: 50px; color: #56c5b2; }
blockquote span { margin-top: 2px; font-size: 29px; line-height: 41px; color: #bebebe; letter-spacing: -.1px; word-spacing: 0; }
.scrollbar { position: absolute; left: 873px; top: 612px; width: 7px; height: 885px; border-radius: 4px; background: #6a6a6a; }

.composer { height: 186px; background: #101010; display: flex; align-items: center; padding: 19px 20px 93px 30px; }
.field { width: 564px; height: 69px; margin-left: 31px; padding-right: 26px; border-radius: 35px; background: #292929; box-shadow: inset 0 0 0 1px #303030; display: flex; align-items: center; justify-content: flex-end; }
.camera { margin-left: 42px; }
.mic { width: 73px; height: 73px; margin-left: 27px; border-radius: 50%; background: #24c163; display: grid; place-items: center; }
```
